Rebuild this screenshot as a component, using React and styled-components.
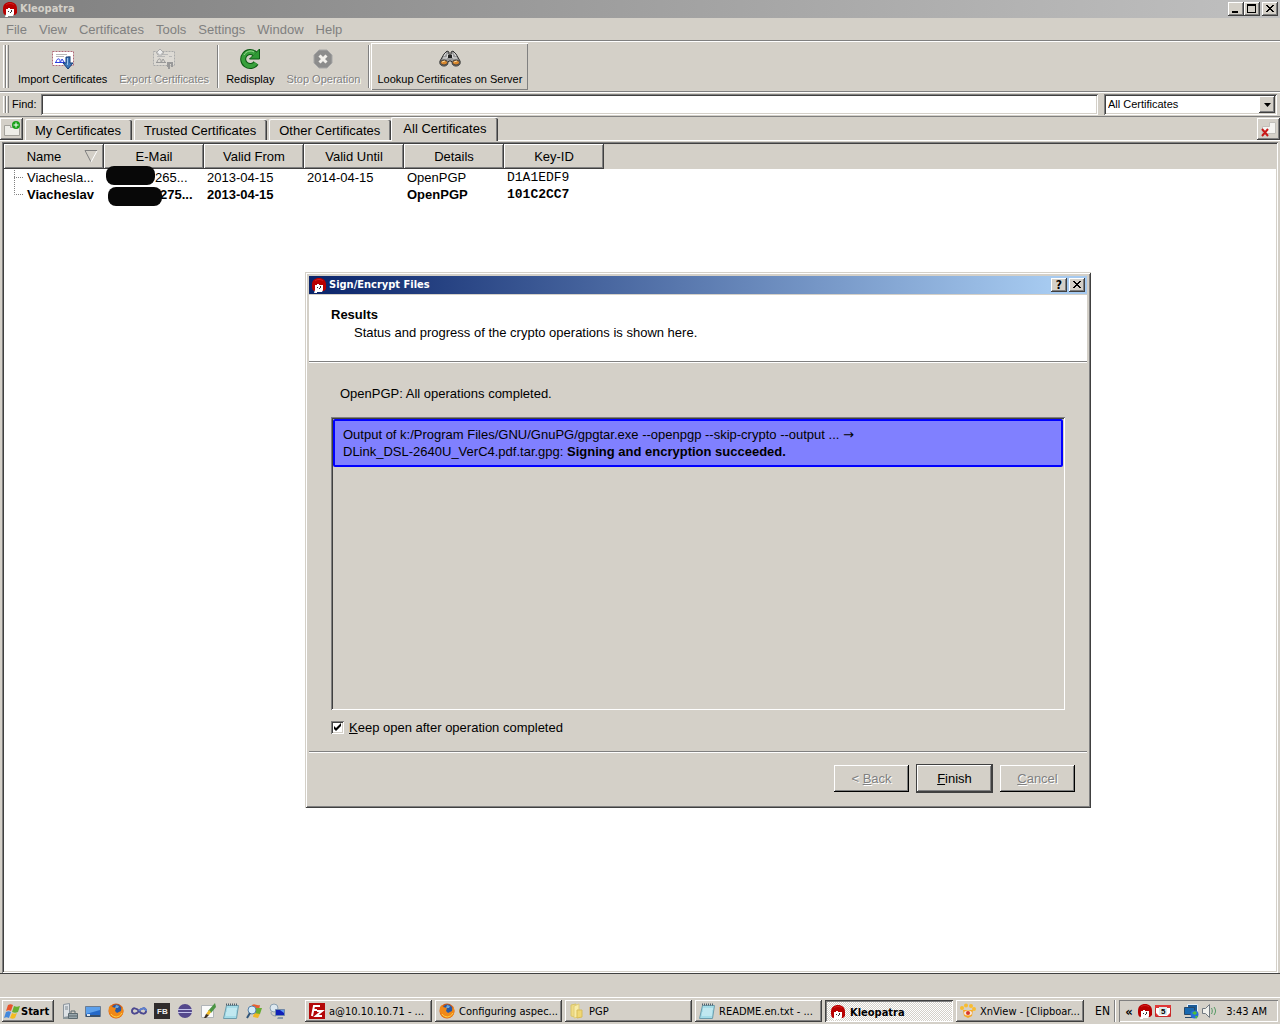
import React, { useState } from "react";
import styled, { createGlobalStyle, css } from "styled-components";

const face = "#d4d0c8";
const ui = `"Liberation Sans", Arial, sans-serif`;
const shell = `"DejaVu Sans Condensed", Tahoma, sans-serif`;

const raised = css`
  box-shadow: inset -1px -1px #404040, inset 1px 1px #fff, inset -2px -2px #808080;
`;
const sunken = css`
  box-shadow: inset 1px 1px #808080, inset -1px -1px #fff, inset 2px 2px #404040,
    inset -2px -2px ${face};
`;

const GlobalStyle = createGlobalStyle`
  * { box-sizing: border-box; }
  body {
    margin: 0;
    background: ${face};
    color: #000;
    font: 13px/17px ${ui};
  }
  button, input, select {
    margin: 0;
    font: inherit;
    color: inherit;
    border: 0;
    border-radius: 0;
  }
  button { padding: 0; background: ${face}; white-space: nowrap; }
  svg { display: block; flex: none; }
`;

/* ---------- icons ---------- */

const Icon = ({ size = 16, children }) => (
  <svg width={size} height={size} viewBox={`0 0 ${size} ${size}`} aria-hidden="true">
    {children}
  </svg>
);

const KleoIcon = () => (
  <Icon>
    <path d="M1 8C1 3 4 1 8 1s7 2 7 7v4l-2 2H3C1 13 1 10 1 8z" fill="#b80000" />
    <path d="M4 4c2-2 6-2 8 0" stroke="#d42020" fill="none" />
    <path d="M4 8h2V7h2v1h4v5l-1 2H6v1H3l1-3z" fill="#fff" />
    <path d="M6 10h1v1H6zM9 9h1v2H9zM8 11h1v1H8z" fill="#333" />
  </Icon>
);

const CertCard = ({ gray }) => (
  <>
    <path d="M.5 3.500h21v14H.5z" fill={gray ? "#dddad4" : "#fff"} stroke={gray ? "#aaa" : "#b06a78"} strokeDasharray="2 1" />
    <path d="M4 6.500h11M4 8.500h8M16 8.500h3" stroke="#b8b8b8" />
    <path d="M3 14.500h10M4 14c1-4 4-4 4-1s1 0 2-2l2 3" stroke={gray ? "#999" : "#2b3ee0"} fill="none" />
  </>
);

const ImportIcon = () => (
  <Icon size={22}>
    <CertCard />
    <path d="M14 9h4v6h3l-5 6-5-6h3z" fill="#3f78b8" stroke="#173f78" />
    <path d="M15.500 10v7" stroke="#9cc4ec" />
  </Icon>
);

const ExportIcon = () => (
  <Icon size={22}>
    <CertCard gray />
    <path d="M7 1l4 4H9v2H5V5H3z" fill="#eee" stroke="#aaa" />
    <path d="M14 19v-5h6v5h-2v-3h-1v5h-2v-2z" fill="#999" />
  </Icon>
);

const RedisplayIcon = () => (
  <Icon size={22}>
    <path d="M17 15a7 7 0 1 1-1-9" fill="none" stroke="#0d5a14" strokeWidth="6" />
    <path d="M20.500 1v10H10.500l4-4z" fill="#2f9a34" stroke="#0d5a14" />
    <path d="M17 15a7 7 0 1 1-1-9" fill="none" stroke="#38a03c" strokeWidth="4" />
    <path d="M5 7c2-4 7-5 10-3" fill="none" stroke="#a0dc98" />
  </Icon>
);

const StopIcon = () => (
  <Icon size={22}>
    <path d="M7 2h8l5 5v8l-5 5H7l-5-5V7z" fill="#8c8c8c" stroke="#a6a6a6" />
    <path d="M7.500 7.500l7 7M14.500 7.500l-7 7" stroke="#f2f0ec" strokeWidth="3" />
  </Icon>
);

const BinocularsIcon = () => (
  <Icon size={22}>
    <path d="M5 6l3-3 2 1v3h2V4l2-1 3 3 4 7c1 4-2 5-4 5s-4-1-4-4l-1-1h-2l-1 1c0 3-2 4-4 4s-5-1-4-5z" fill="#999" stroke="#303030" />
    <path d="M5 8l2-3M9 6l-1 4M13 6l1 4M17 8l-2-3M4 10h4M14 10h4" stroke="#e6e6e6" />
    <path d="M9 7h4v3H9z" fill="#222" />
    <ellipse cx="5" cy="14.500" rx="3.500" ry="2.500" fill="#d8862c" stroke="#444" />
    <ellipse cx="17" cy="14.500" rx="3.500" ry="2.500" fill="#d8862c" stroke="#444" />
    <path d="M3 14l3-1M15 14l3-1" stroke="#f6d8a0" />
  </Icon>
);

const NewTabIcon = () => (
  <Icon>
    <path d="M.5 4.500h6v2h9v8H.5z" fill="#eeede8" stroke="#a4a29c" />
    <circle cx="12" cy="4" r="4" fill="#18a018" />
    <path d="M12 1.500v5M9.500 4h5" stroke="#fff" />
  </Icon>
);

const CloseTabIcon = () => (
  <Icon>
    <path d="M1.500 5.500h7v-4h6v11h-13z" fill="#f5f4f1" stroke="#c2c0bb" />
    <path d="M1 8l6 7M7 8l-6 7" stroke="#c81818" strokeWidth="2" />
  </Icon>
);

const WindowsIcon = () => (
  <Icon>
    <path d="M4 2c2-1 3-1 5 0L7 8C5 7 4 7 2 8z" fill="#e8542c" />
    <path d="M10 3c2 1 3 1 6 0l-2 6c-2 1-4 1-6 0z" fill="#68b030" />
    <path d="M2 9c2-1 3-1 5 0l-2 6c-2-1-3-1-5 0z" fill="#4488dc" />
    <path d="M8 10c2 1 3 1 5 0l-2 5c-2 1-3 1-5 0z" fill="#f4bc20" />
  </Icon>
);

const ServerIcon = () => (
  <Icon>
    <path d="M1.500 1.500l6-1v13l-6 1z" fill="#dde2e6" stroke="#8a949c" />
    <path d="M3 4h3M3 6h3" stroke="#7c8890" />
    <path d="M1 14h6v2H1z" fill="#8c989c" />
    <path d="M6.500 10.500h9v5h-9z" fill="#98a6ac" stroke="#5c6a70" />
    <path d="M9 10V8h4v2M7 13h8" stroke="#5c6a70" fill="none" />
  </Icon>
);

const DesktopIcon = () => (
  <Icon>
    <path d="M.5 3.500h15v10H.5z" fill="#2468c8" stroke="#6c7c90" />
    <path d="M1 4h14v3L1 11z" fill="#5ca0ec" />
    <path d="M1 12h14v2H1z" fill="#38506c" />
    <path d="M2 11h3v2H2z" fill="#d8e4f0" />
  </Icon>
);

const FirefoxIcon = () => (
  <Icon>
    <circle cx="8" cy="8" r="7.500" fill="#d85c10" />
    <circle cx="8.500" cy="6.500" r="5" fill="#2858a4" />
    <path d="M8 2l3 1-1 2-3 0z" fill="#70a8dc" />
    <path d="M1 4l2-2 1 2 4 1-1 3 2 2 4-2 1-5c3 5 1 12-6 12C2 15 0 9 1 4z" fill="#f08818" />
    <path d="M3 11c3 4 8 4 11-1" stroke="#fcd048" fill="none" />
  </Icon>
);

const InfinityIcon = () => (
  <Icon>
    <path d="M8 8C6 5 1 4 1 8s5 3 7 0 7-4 7 0-5 3-7 0z" fill="none" stroke="#4c4890" strokeWidth="2" />
    <path d="M8 8c2-3 7-4 7 0" fill="none" stroke="#5c80d0" strokeWidth="2" />
  </Icon>
);

const FlashIcon = () => (
  <Icon>
    <path d="M0 0h16v16H0z" fill="#302c2c" />
    <text x="3" y="11" fill="#eee" fontFamily="Liberation Sans" fontWeight="700" fontSize="8">FB</text>
  </Icon>
);

const EclipseIcon = () => (
  <Icon>
    <circle cx="8" cy="8" r="7" fill="#54488c" />
    <path d="M1 6.500h14M1 9.500h14" stroke="#c4c4ec" />
  </Icon>
);

const BrushIcon = () => (
  <Icon>
    <path d="M1.500 2.500h12v12h-12z" fill="#fafafa" stroke="#b0b4b8" />
    <path d="M15 0l1 4-5 6-3-2z" fill="#4c9444" />
    <path d="M9 7l2 2-2 3-3-1z" fill="#f0b820" />
    <path d="M6 11l3 1-3 3-2 0z" fill="#403020" />
  </Icon>
);

const NotepadIcon = () => (
  <Icon>
    <path d="M3.500 2.500h12l-2 13H.5z" fill="#a4dce8" stroke="#6c9cac" />
    <path d="M4 6h10M4 8h9M3 10h10M3 12h10" stroke="#dcf4f8" />
    <path d="M3 1.500h12" stroke="#50606c" strokeDasharray="1 1" strokeWidth="2" />
  </Icon>
);

const SearchWinIcon = () => (
  <Icon>
    <path d="M6 2c3-2 4 1 8 0l-1 5H5z" fill="#e86030" />
    <path d="M10 5l6 0-2 6h-5z" fill="#68ac34" />
    <path d="M8 10l6 1-2 4-5-1z" fill="#f0b828" />
    <circle cx="6" cy="7" r="4" fill="#d4ecfc" stroke="#5880a8" />
    <path d="M4 10l-3 5" stroke="#305478" strokeWidth="2" />
  </Icon>
);

const NetIcon = () => (
  <Icon>
    <circle cx="5" cy="5" r="4" fill="#dce8f0" stroke="#8ca0b0" />
    <path d="M2 9c0 3 2 4 5 4" stroke="#909ca8" fill="none" />
    <path d="M6.500 6.500h9v6h-9z" fill="#1020b8" stroke="#7088a8" />
    <path d="M11 7h4v3z" fill="#6098f0" />
    <path d="M9 14h5v2H8z" fill="#8898a8" />
  </Icon>
);

const FileZillaIcon = () => (
  <Icon>
    <path d="M0 0h16v16H0z" fill="#b40808" />
    <path d="M3 13L5 3h6M4 7h4M8 8h5l-6 5h6" fill="none" stroke="#fff" strokeWidth="2" />
  </Icon>
);

const FolderIcon = () => (
  <Icon>
    <path d="M2 2l5-1v13l-5-1z" fill="#f0dc84" stroke="#d8c468" />
    <path d="M5 3l5-2v13l-5 1z" fill="#f8eca8" stroke="#e0cc78" />
    <path d="M8 7h5v7l-5 1z" fill="#f0d874" stroke="#d8bc58" />
  </Icon>
);

const XnViewIcon = () => (
  <Icon>
    <path d="M3 7h10l-1 6-4 2-4-2z" fill="#f4a828" />
    <circle cx="2" cy="5" r="2" fill="#f8bc30" />
    <circle cx="6" cy="2.500" r="2" fill="#f8bc30" />
    <circle cx="11" cy="3" r="2" fill="#f8bc30" />
    <circle cx="14" cy="6" r="2" fill="#f8bc30" />
    <ellipse cx="8" cy="10" rx="4" ry="2.500" fill="#f8e4d8" />
    <circle cx="8" cy="10" r="2" fill="#d83828" />
  </Icon>
);

const CalendarIcon = () => (
  <Icon>
    <path d="M.5 2.500h15v11H.5z" fill="#fff" stroke="#c82828" />
    <path d="M0 2h16v3H0z" fill="#e03838" />
    <path d="M4 4h8v8H4z" fill="#dce8e8" />
    <text x="6" y="11" fontFamily="Liberation Sans" fontWeight="700" fontSize="8">5</text>
    <path d="M1 10l3 3H1zM15 10l-3 3h3z" fill="#e03838" />
  </Icon>
);

const NetworkIcon = () => (
  <Icon>
    <path d="M4.500 1.500h10v7h-10z" fill="#1c5c98" stroke="#e8f0f8" />
    <path d="M1.500 4.500h10v7h-10z" fill="#1868b0" stroke="#284868" />
    <path d="M2 14h8v1H2z" fill="#284868" />
    <circle cx="11.500" cy="11.500" r="4" fill="#2870d8" />
    <path d="M9 10l3-2 2 2-2 2zM12 13l3 0-2 3z" fill="#50c038" />
  </Icon>
);

const SpeakerIcon = () => (
  <Icon>
    <path d="M1.500 5.500h3l4-4v13l-4-4h-3z" fill="#f0f0ec" stroke="#707880" />
    <path d="M10.500 5c1 2 1 4 0 6M13 4c2 3 2 5 0 8" stroke="#509860" fill="none" />
  </Icon>
);

/* ---------- window chrome ---------- */

const Desktop = styled.div`
  position: relative;
  display: flex;
  flex-direction: column;
  min-height: 100vh;
`;

const MainWindow = styled.main`
  flex: 1;
  display: flex;
  flex-direction: column;
`;

const TitleBar = styled.header`
  display: flex;
  align-items: center;
  gap: 2px;
  height: 18px;
  padding: 0 2px;
  color: ${(p) => (p.$active ? "#fff" : face)};
  font: bold 11px/18px ${shell};
  background: linear-gradient(
    to right,
    ${(p) => (p.$active ? "#0a246a, #a6caf0 95%" : "#808080, #c0c0c0")}
  );
`;

const TitleText = styled.h1`
  flex: 1;
  margin: 0;
  font: inherit;
`;

const WinButton = styled.button`
  display: grid;
  place-items: center;
  width: 16px;
  height: 14px;
  font: bold 12px/12px ${shell};
  color: #000;
  ${raised}
`;

const WinButtons = styled.div`
  display: flex;
`;

const MinGlyph = () => (
  <svg width="10" height="10"><path d="M1 7h6v2H1z" /></svg>
);
const MaxGlyph = () => (
  <svg width="10" height="10"><path d="M0 0h9v9H0zM1 2v6h7V2z" fillRule="evenodd" /></svg>
);
const CloseGlyph = () => (
  <svg width="10" height="8">
    <path
      d="M1 0h2v1h1v1h2V1h1V0h2v1H8v1H7v1H6v1h1v1h1v1h1v1H7V6H6V5H4v1H3v1H1V6h1V5h1V4h1V3H3V2H2V1H1z"
      shapeRendering="crispEdges"
    />
  </svg>
);

const MenuBar = styled.nav`
  display: flex;
  align-items: center;
  gap: 12px;
  height: 23px;
  padding: 0 6px;
  border-bottom: 1px solid #808080;
`;

const MenuItem = styled.button`
  color: #808080;
`;

const ToolBar = styled.div`
  display: flex;
  align-items: center;
  height: 51px;
  padding: 0 3px;
  border-top: 1px solid #fff;
  border-bottom: 1px solid #808080;
  font-size: 11px;
  line-height: 13px;
`;

const Grip = styled.span`
  flex: none;
  width: 6px;
  height: ${(p) => p.$height}px;
  margin-right: 3px;
  background: linear-gradient(to right, #fff 1px, ${face} 1px 2px, #808080 2px 3px, #fff 3px 4px, ${face} 4px 5px, #808080 5px);
`;

const Separator = styled.span`
  width: 2px;
  height: 43px;
  margin: 0 1px 0 2px;
  border-left: 1px solid #808080;
  border-right: 1px solid #fff;
`;

const ToolButton = styled.button`
  display: flex;
  flex-direction: column;
  align-items: center;
  gap: 3px;
  height: 47px;
  padding: 5px 6px 0;
  ${(p) =>
    p.disabled &&
    css`
      color: #808080;
      text-shadow: 1px 1px #fff;
    `}
  ${(p) => p.$raised && "box-shadow: inset 1px 1px #fff, inset -1px -1px #808080;"}
`;

const FindBar = styled.div`
  display: flex;
  align-items: center;
  height: 25px;
  padding: 0 3px;
  border-top: 1px solid #fff;
  border-bottom: 1px solid #808080;
  font-size: 11px;
`;

const FindInput = styled.input`
  flex: 1;
  height: 21px;
  margin: 0 6px 0 5px;
  padding: 0 4px;
  outline: 0;
  background: #fff;
  ${sunken}
`;

const SelectBox = styled.div`
  position: relative;
  width: 173px;
  height: 21px;
  select {
    width: 100%;
    height: 100%;
    padding: 0 4px;
    appearance: none;
    background: #fff;
    ${sunken}
  }
  span {
    position: absolute;
    top: 2px;
    right: 2px;
    display: grid;
    place-items: center;
    width: 16px;
    height: 17px;
    background: ${face};
    pointer-events: none;
    ${raised}
  }
`;

const TabBar = styled.div`
  display: flex;
  align-items: flex-end;
  height: 24px;
  border-bottom: 1px solid #fff;
`;

const CornerButton = styled.button`
  display: grid;
  place-items: center;
  width: 23px;
  height: 22px;
  ${raised}
`;

const Tabs = styled.div`
  flex: 1;
  display: flex;
  align-items: flex-end;
  gap: 2px;
  padding-left: 2px;
`;

const Tab = styled.button`
  height: 21px;
  padding: 0 11px 0 9px;
  border-radius: 2px 2px 0 0;
  border: solid #fff;
  border-width: 1px 0 0 1px;
  box-shadow: inset -1px 0 #404040, inset -2px 0 #808080;
  ${(p) =>
    p.$active &&
    css`
      height: 24px;
      margin: 0 0 -1px -2px;
      padding: 0 12px 2px 11px;
    `}
`;

const ListFrame = styled.section`
  flex: 1;
  margin: 1px 2px 0;
  padding: 2px;
  background: #fff;
  ${sunken}
`;

const CertTable = styled.table`
  width: 100%;
  table-layout: fixed;
  border-collapse: collapse;
  th {
    width: 100px;
    height: 25px;
    padding: 0;
    font-weight: normal;
    background: ${face};
    ${raised}
  }
  th:first-child { padding-right: 20px; position: relative; }
  th:last-child { width: auto; box-shadow: none; }
  td {
    height: 17px;
    padding: 0 0 0 3px;
    white-space: nowrap;
  }
`;

const SortArrow = styled.svg`
  position: absolute;
  top: 6px;
  right: 6px;
`;

const CertRow = styled.tr`
  font-weight: ${(p) => (p.$own ? "bold" : "normal")};
`;

const NameCell = styled.div`
  display: flex;
  align-items: center;
  gap: 3px;
  padding-left: 7px;
`;

const MailCell = styled.div`
  display: flex;
  align-items: center;
  height: 17px;
  margin-left: ${(p) => (p.$low ? 1 : -1)}px;
`;

const Blob = styled.span`
  position: relative;
  top: ${(p) => (p.$low ? 2 : -2)}px;
  flex: none;
  width: ${(p) => (p.$low ? 54 : 49)}px;
  height: 19px;
  margin-right: ${(p) => (p.$low ? -2 : 0)}px;
  border-radius: 8px;
  background: #080808;
`;

const KeyId = styled.td`
  font-family: "Liberation Mono", "Courier New", monospace;
`;

const StatusBar = styled.footer`
  height: 24px;
  border-top: 1px solid #404040;
`;

/* ---------- dialog ---------- */

const Dialog = styled.section`
  position: absolute;
  left: 305px;
  top: 272px;
  width: 786px;
  padding: 4px;
  background: ${face};
  box-shadow: inset 1px 1px ${face}, inset -1px -1px #404040, inset 2px 2px #fff,
    inset -2px -2px #808080;
`;

const DialogHead = styled.div`
  height: 67px;
  margin-top: 1px;
  padding: 11px 22px;
  background: #fff;
  border-bottom: 1px solid #808080;
  line-height: 18px;
  h2 {
    margin: 0;
    font-size: 13px;
  }
  p {
    margin: 0 0 0 23px;
  }
`;

const DialogBody = styled.div`
  padding: 22px 22px 15px;
  border-top: 1px solid #fff;
  border-bottom: 1px solid #808080;
  > p {
    margin: 0 9px 15px;
  }
`;

const ResultList = styled.div`
  height: 293px;
  padding: 2px;
  box-shadow: inset 1px 1px #808080, inset -1px -1px #fff, inset 2px 2px #404040;
`;

const Result = styled.p`
  margin: 0;
  padding: 5px 8px;
  border: 2px solid #0000ff;
  border-radius: 2px;
  background: #8080ff;
`;

const Arrow = styled.span`
  font-family: "DejaVu Sans", sans-serif;
  line-height: 1;
`;

const KeepOpen = styled.label`
  display: flex;
  align-items: center;
  gap: 5px;
  margin-top: 9px;
`;

const CheckBox = styled.input`
  appearance: none;
  width: 13px;
  height: 13px;
  background: #fff;
  ${sunken}
  &:checked {
    background: #fff
      url("data:image/svg+xml,%3Csvg xmlns='http://www.w3.org/2000/svg' width='13' height='13'%3E%3Cpath d='M3 5l2 2 5-5v3L5 10 3 8z'/%3E%3C/svg%3E");
  }
`;

const DialogButtons = styled.div`
  display: flex;
  align-items: center;
  justify-content: flex-end;
  gap: 7px;
  height: 52px;
  padding: 0 12px 1px;
  border-top: 1px solid #fff;
`;

const PushButton = styled.button`
  width: 75px;
  height: 27px;
  box-shadow: inset -1px -1px #000, inset 1px 1px #fff, inset -2px -2px #808080;
  ${(p) =>
    p.disabled &&
    css`
      color: #808080;
      text-shadow: 1px 1px #fff;
    `}
  ${(p) =>
    p.$primary &&
    css`
      width: 77px;
      height: 29px;
      border: 1px solid #404040;
      ${raised}
    `}
`;

/* ---------- taskbar ---------- */

const TaskBar = styled.footer`
  display: flex;
  align-items: center;
  height: 27px;
  padding: 0 2px;
  border-top: 1px solid #fff;
  font: 11px/13px ${shell};
`;

const TaskButton = styled.button`
  display: flex;
  align-items: center;
  gap: 4px;
  flex: 0 0 ${(p) => p.$width || 127}px;
  height: 22px;
  padding: 0 4px;
  overflow: hidden;
  ${raised}
  ${(p) =>
    p.$active &&
    css`
      padding: 2px 3px 0 5px;
      font-weight: bold;
      background: repeating-conic-gradient(#fff 0 25%, ${face} 0 50%) 0 0 / 2px 2px;
      box-shadow: inset 1px 1px #404040, inset -1px -1px #fff, inset 2px 2px #808080;
    `}
`;

const StartButton = styled(TaskButton)`
  flex-basis: 52px;
  gap: 1px;
  padding: 0 2px;
  font-weight: bold;
`;

const QuickLaunch = styled.div`
  display: flex;
  flex: none;
  gap: 7px;
  margin: 0 20px 0 8px;
`;

const QuickButton = styled.button`
  width: 16px;
  height: 16px;
`;

const Tasks = styled.div`
  flex: 1;
  display: flex;
  gap: 3px;
`;

const Language = styled.span`
  padding: 0 1px 0 9px;
  font-size: 12px;
`;

const Tray = styled.div`
  display: flex;
  align-items: center;
  gap: 2px;
  width: 159px;
  height: 22px;
  margin-left: 8px;
  padding: 0 11px 0 4px;
  box-shadow: inset 1px 1px #808080, inset -1px -1px #fff, -3px 0 ${face}, -4px 0 #fff, -5px 0 #808080;
  svg:nth-of-type(3) { margin-left: 10px; }
  time { margin-left: auto; }
`;

const Chevron = styled.button`
  width: 12px;
  font-weight: bold;
  font-size: 13px;
`;

const menus = ["File", "View", "Certificates", "Tools", "Settings", "Window", "Help"];
const tabs = ["My Certificates", "Trusted Certificates", "Other Certificates", "All Certificates"];
const columns = ["Name", "E-Mail", "Valid From", "Valid Until", "Details", "Key-ID"];

const certificates = [
  { name: "Viachesla...", mail: "265...", from: "2013-04-15", until: "2014-04-15", key: "D1A1EDF9" },
  { name: "Viacheslav", mail: "275...", from: "2013-04-15", until: "", key: "101C2CC7", own: true },
];

const launchers = [
  ["Server Manager", ServerIcon],
  ["Show Desktop", DesktopIcon],
  ["Firefox", FirefoxIcon],
  ["Visual Studio", InfinityIcon],
  ["Flash Builder", FlashIcon],
  ["Eclipse", EclipseIcon],
  ["Editor", BrushIcon],
  ["Notepad", NotepadIcon],
  ["Search", SearchWinIcon],
  ["Remote Desktop", NetIcon],
];

const tasks = [
  { title: "a@10.10.10.71 - ...", icon: FileZillaIcon },
  { title: "Configuring aspec...", icon: FirefoxIcon },
  { title: "PGP", icon: FolderIcon },
  { title: "README.en.txt - ...", icon: NotepadIcon },
  { title: "Kleopatra", icon: KleoIcon, active: true, width: 128 },
  { title: "XnView - [Clipboar...", icon: XnViewIcon, width: 128 },
];

const SignEncryptDialog = () => {
  const [keepOpen, setKeepOpen] = useState(true);
  return (
    <Dialog role="dialog" aria-label="Sign/Encrypt Files">
      <TitleBar $active>
        <KleoIcon />
        <TitleText as="h2">Sign/Encrypt Files</TitleText>
        <WinButton aria-label="Help">?</WinButton>
        <WinButton aria-label="Close dialog"><CloseGlyph /></WinButton>
      </TitleBar>
      <DialogHead>
        <h2>Results</h2>
        <p>Status and progress of the crypto operations is shown here.</p>
      </DialogHead>
      <DialogBody>
        <p>OpenPGP: All operations completed.</p>
        <ResultList>
          <Result>
            Output of k:/Program Files/GNU/GnuPG/gpgtar.exe --openpgp --skip-crypto --output ... <Arrow>→</Arrow>
            <br />
            DLink_DSL-2640U_VerC4.pdf.tar.gpg: <b>Signing and encryption succeeded.</b>
          </Result>
        </ResultList>
        <KeepOpen>
          <CheckBox
            type="checkbox"
            checked={keepOpen}
            onChange={(e) => setKeepOpen(e.target.checked)}
          />
          <span><u>K</u>eep open after operation completed</span>
        </KeepOpen>
      </DialogBody>
      <DialogButtons>
        <PushButton disabled>&lt; <u>B</u>ack</PushButton>
        <PushButton $primary><u>F</u>inish</PushButton>
        <PushButton disabled><u>C</u>ancel</PushButton>
      </DialogButtons>
    </Dialog>
  );
};

const CertificateList = () => (
  <ListFrame>
    <CertTable>
      <thead>
        <tr>
          {columns.map((title, i) => (
            <th key={title}>
              {title}
              {i === 0 && (
                <SortArrow width="14" height="13">
                  <path d="M13 .5H1L7 12" fill="none" stroke="#808080" />
                  <path d="M13 1L7 12" stroke="#fff" />
                </SortArrow>
              )}
            </th>
          ))}
          <th />
        </tr>
      </thead>
      <tbody>
        {certificates.map((cert) => (
          <CertRow key={cert.key} $own={cert.own}>
            <td>
              <NameCell>
                <svg width="10" height="17">
                  <path
                    d={cert.own ? "M.5 0v8.500H10" : "M.5 1v16M0 8.500h10"}
                    fill="none"
                    stroke="#808080"
                    strokeDasharray="1 1"
                  />
                </svg>
                {cert.name}
              </NameCell>
            </td>
            <td>
              <MailCell $low={cert.own}>
                <Blob $low={cert.own} />
                {cert.mail}
              </MailCell>
            </td>
            <td>{cert.from}</td>
            <td>{cert.until}</td>
            <td>OpenPGP</td>
            <KeyId>{cert.key}</KeyId>
            <td />
          </CertRow>
        ))}
      </tbody>
    </CertTable>
  </ListFrame>
);

const App = () => {
  const [tab, setTab] = useState("All Certificates");
  return (
    <Desktop>
      <GlobalStyle />
      <MainWindow>
        <TitleBar>
          <KleoIcon />
          <TitleText>Kleopatra</TitleText>
          <WinButtons>
            <WinButton aria-label="Minimize"><MinGlyph /></WinButton>
            <WinButton aria-label="Maximize"><MaxGlyph /></WinButton>
          </WinButtons>
          <WinButton aria-label="Close"><CloseGlyph /></WinButton>
        </TitleBar>
        <MenuBar>
          {menus.map((menu) => (
            <MenuItem key={menu}>{menu}</MenuItem>
          ))}
        </MenuBar>
        <ToolBar>
          <Grip $height={43} />
          <ToolButton><ImportIcon />Import Certificates</ToolButton>
          <ToolButton disabled><ExportIcon />Export Certificates</ToolButton>
          <Separator />
          <ToolButton><RedisplayIcon />Redisplay</ToolButton>
          <ToolButton disabled><StopIcon />Stop Operation</ToolButton>
          <Separator />
          <ToolButton $raised><BinocularsIcon />Lookup Certificates on Server</ToolButton>
        </ToolBar>
        <FindBar>
          <Grip $height={17} />
          <label htmlFor="find">Find:</label>
          <FindInput id="find" type="text" />
          <SelectBox>
            <select aria-label="Certificate filter" defaultValue="All Certificates">
              <option>All Certificates</option>
            </select>
            <span>
              <svg width="7" height="4"><path d="M0 0h7L3.500 4z" /></svg>
            </span>
          </SelectBox>
        </FindBar>
        <TabBar>
          <CornerButton aria-label="New tab"><NewTabIcon /></CornerButton>
          <Tabs>
            {tabs.map((name) => (
              <Tab key={name} $active={tab === name} onClick={() => setTab(name)}>
                {name}
              </Tab>
            ))}
          </Tabs>
          <CornerButton aria-label="Close tab"><CloseTabIcon /></CornerButton>
        </TabBar>
        <CertificateList />
        <StatusBar />
      </MainWindow>
      <SignEncryptDialog />
      <TaskBar>
        <StartButton><WindowsIcon />Start</StartButton>
        <QuickLaunch>
          {launchers.map(([name, LaunchIcon]) => (
            <QuickButton key={name} aria-label={name}><LaunchIcon /></QuickButton>
          ))}
        </QuickLaunch>
        <Tasks>
          {tasks.map(({ title, icon: TaskIcon, active, width }) => (
            <TaskButton key={title} $active={active} $width={width}>
              <TaskIcon />
              {title}
            </TaskButton>
          ))}
        </Tasks>
        <Language>EN</Language>
        <Tray>
          <Chevron aria-label="Show hidden icons">«</Chevron>
          <KleoIcon />
          <CalendarIcon />
          <NetworkIcon />
          <SpeakerIcon />
          <time>3:43 AM</time>
        </Tray>
      </TaskBar>
    </Desktop>
  );
};

export default App;
